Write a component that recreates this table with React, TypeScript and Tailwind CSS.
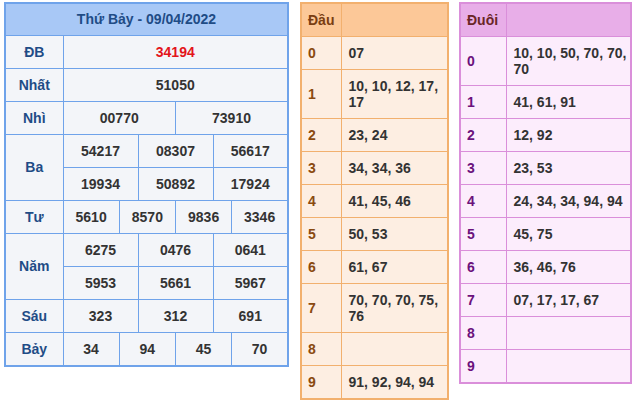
const font = { fontFamily: '"Liberation Sans", Arial, sans-serif' };

type Cell = { v: string; span: number; red?: boolean };
type Row = { label?: string; rowSpan?: number; cells: Cell[] };

const split = (vals: string[], span: number, red = false): Cell[] => vals.map((v) => ({ v, span, red }));

const prizes: Row[] = [
  { label: "ĐB", cells: split(["34194"], 12, true) },
  { label: "Nhất", cells: split(["51050"], 12) },
  { label: "Nhì", cells: split(["00770", "73910"], 6) },
  { label: "Ba", rowSpan: 2, cells: split(["54217", "08307", "56617"], 4) },
  { cells: split(["19934", "50892", "17924"], 4) },
  { label: "Tư", cells: split(["5610", "8570", "9836", "3346"], 3) },
  { label: "Năm", rowSpan: 2, cells: split(["6275", "0476", "0641"], 4) },
  { cells: split(["5953", "5661", "5967"], 4) },
  { label: "Sáu", cells: split(["323", "312", "691"], 4) },
  { label: "Bảy", cells: split(["34", "94", "45", "70"], 3) },
];

const dau = [
  "07",
  "10, 10, 12, 17, 17",
  "23, 24",
  "34, 34, 36",
  "41, 45, 46",
  "50, 53",
  "61, 67",
  "70, 70, 70, 75, 76",
  "",
  "91, 92, 94, 94",
];

const duoi = [
  "10, 10, 50, 70, 70, 70",
  "41, 61, 91",
  "12, 92",
  "23, 53",
  "24, 34, 34, 94, 94",
  "45, 75",
  "36, 46, 76",
  "07, 17, 17, 67",
  "",
  "",
];

function ResultTable() {
  return (
    <table className="w-[285px] table-fixed border-collapse border-2 border-[#6fa3ea] text-[14px] font-bold leading-4">
      <colgroup>
        <col className="w-[58px]" />
        {Array.from({ length: 12 }).map((_, i) => (
          <col key={i} />
        ))}
      </colgroup>
      <thead>
        <tr>
          <th colSpan={13} className="h-[32px] border border-[#6fa3ea] bg-[#a8c8f6] text-center text-[#1f4c86]">
            Thứ Bảy - 09/04/2022
          </th>
        </tr>
      </thead>
      <tbody>
        {prizes.map((row, i) => (
          <tr key={i}>
            {row.label && (
              <td rowSpan={row.rowSpan} className="border border-[#6fa3ea] bg-[#f3f5f9] text-center text-[#1f4c86]">
                {row.label}
              </td>
            )}
            {row.cells.map((c, j) => (
              <td
                key={j}
                colSpan={c.span}
                className={`border border-[#6fa3ea] bg-[#f3f5f9] py-2 text-center ${c.red ? "text-[#e3141b]" : "text-[#333333]"}`}
              >
                {c.v}
              </td>
            ))}
          </tr>
        ))}
      </tbody>
    </table>
  );
}

function LotoTable({
  title,
  rows,
  width,
  firstCol,
  border,
  head,
  body,
  digit,
  titleColor,
}: {
  title: string;
  rows: string[];
  width: string;
  firstCol: string;
  border: string;
  head: string;
  body: string;
  digit: string;
  titleColor: string;
}) {
  return (
    <table className={`${width} table-fixed border-collapse border-2 ${border} text-[14px] font-bold leading-4`}>
      <colgroup>
        <col className={firstCol} />
        <col />
      </colgroup>
      <thead>
        <tr>
          <th className={`border ${border} ${head} px-[6px] py-2 text-left ${titleColor}`}>{title}</th>
          <th className={`border ${border} ${head}`} />
        </tr>
      </thead>
      <tbody>
        {rows.map((v, i) => (
          <tr key={i}>
            <td className={`border ${border} ${body} px-[6px] py-2 ${digit}`}>{i}</td>
            <td className={`border ${border} ${body} h-[33px] py-2 pl-[7px] pr-0 text-[#333333]`}>{v}</td>
          </tr>
        ))}
      </tbody>
    </table>
  );
}

export default function App() {
  return (
    <div className="flex items-start bg-white pl-1 pt-[2px]" style={font}>
      <ResultTable />
      <div className="ml-[11px]">
        <LotoTable
          title="Đầu"
          rows={dau}
          width="w-[149px]"
          firstCol="w-[40px]"
          border="border-[#f2b06e]"
          head="bg-[#fcc898]"
          body="bg-[#fdeee2]"
          digit="text-[#8a4a10]"
          titleColor="text-[#7a3e12]"
        />
      </div>
      <div className="ml-[10px]">
        <LotoTable
          title="Đuôi"
          rows={duoi}
          width="w-[173px]"
          firstCol="w-[46px]"
          border="border-[#da8fda]"
          head="bg-[#e8aee8]"
          body="bg-[#fcedfc]"
          digit="text-[#6b127c]"
          titleColor="text-[#6a2626]"
        />
      </div>
    </div>
  );
}
